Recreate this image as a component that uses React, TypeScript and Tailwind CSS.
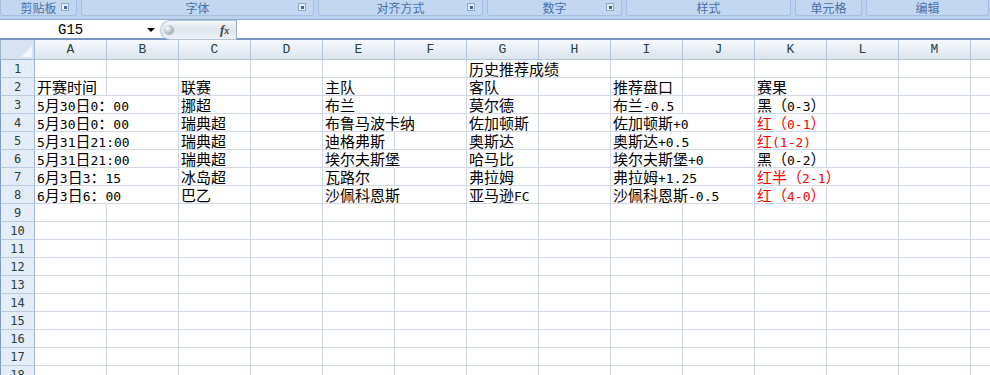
import React from "react";

const COLS = ["A", "B", "C", "D", "E", "F", "G", "H", "I", "J", "K", "L", "M", "N"];

type CellSpec = { t: string; red?: boolean; over?: boolean };
type RowSpec = Record<string, CellSpec>;

const DATA: Record<number, RowSpec> = {
  1: { G: { t: "历史推荐成绩", over: true } },
  2: {
    A: { t: "开赛时间" },
    C: { t: "联赛" },
    E: { t: "主队" },
    G: { t: "客队" },
    I: { t: "推荐盘口" },
    K: { t: "赛果" },
  },
  3: {
    A: { t: "5月30日0：00", over: true },
    C: { t: "挪超" },
    E: { t: "布兰" },
    G: { t: "莫尔德" },
    I: { t: "布兰-0.5" },
    K: { t: "黑（0-3）" },
  },
  4: {
    A: { t: "5月30日0：00", over: true },
    C: { t: "瑞典超" },
    E: { t: "布鲁马波卡纳", over: true },
    G: { t: "佐加顿斯" },
    I: { t: "佐加顿斯+0", over: true },
    K: { t: "红（0-1）", red: true },
  },
  5: {
    A: { t: "5月31日21:00", over: true },
    C: { t: "瑞典超" },
    E: { t: "迪格弗斯" },
    G: { t: "奥斯达" },
    I: { t: "奥斯达+0.5", over: true },
    K: { t: "红(1-2)", red: true },
  },
  6: {
    A: { t: "5月31日21:00", over: true },
    C: { t: "瑞典超" },
    E: { t: "埃尔夫斯堡", over: true },
    G: { t: "哈马比" },
    I: { t: "埃尔夫斯堡+0", over: true },
    K: { t: "黑（0-2）" },
  },
  7: {
    A: { t: "6月3日3：15", over: true },
    C: { t: "冰岛超" },
    E: { t: "瓦路尔" },
    G: { t: "弗拉姆" },
    I: { t: "弗拉姆+1.25", over: true },
    K: { t: "红半（2-1）", red: true, over: true },
  },
  8: {
    A: { t: "6月3日6：00", over: true },
    C: { t: "巴乙" },
    E: { t: "沙佩科恩斯", over: true },
    G: { t: "亚马逊FC" },
    I: { t: "沙佩科恩斯-0.5", over: true },
    K: { t: "红（4-0）", red: true },
  },
};

function T({ s }: { s: string }) {
  const parts = s.split(/([\x20-\x7e]+)/).filter((p) => p.length > 0);
  return (
    <>
      {parts.map((p, i) =>
        /^[\x20-\x7e]+$/.test(p) ? (
          <span key={i} className="inline-block h-[16px] font-['DejaVu_Sans_Mono'] text-[13px] leading-[16px]">
            {p}
          </span>
        ) : (
          <span key={i} className="inline-block h-[16px] leading-[16px]">
            {p}
          </span>
        )
      )}
    </>
  );
}

function Launcher() {
  return (
    <span className="absolute right-[7px] top-[3px] flex h-[8px] w-[8px] items-center justify-center border border-[#8aa8d0] bg-[#e6eef9]">
      <span className="h-[3px] w-[3px] bg-[#41689f]" />
    </span>
  );
}

function Group({ w, label, launcher }: { w: number; label: string; launcher?: boolean }) {
  return (
    <div
      className="relative flex h-[16px] shrink-0 items-end justify-center rounded-b-[3px] border border-t-0 border-[#a5bfe2] bg-[#c3d7f1] text-[12px] leading-[14px] text-[#4a6fa9]"
      style={{ width: w }}
    >
      <span className="font-['Noto_Sans_CJK_SC',sans-serif]">{label}</span>
      {launcher && <Launcher />}
    </div>
  );
}

export default function App() {
  const rows = Array.from({ length: 18 }, (_, i) => i + 1);
  return (
    <div className="h-[375px] w-[990px] overflow-hidden bg-white font-['Noto_Sans_CJK_SC',sans-serif]">
      {/* Ribbon labels */}
      <div className="flex h-[20px] gap-[4px] border-b border-[#8eaacd] bg-[#bdd2ee]">
        <Group w={77} label="剪贴板" launcher />
        <Group w={233} label="字体" launcher />
        <Group w={165} label="对齐方式" launcher />
        <Group w={135} label="数字" launcher />
        <Group w={165} label="样式" />
        <Group w={67} label="单元格" />
        <Group w={123} label="编辑" />
      </div>

      {/* Formula bar */}
      <div className="flex h-[20px] border-b-2 border-[#7896be] bg-white">
        <div className="relative flex w-[160px] items-center">
          <span className="absolute left-[58px] top-[1px] font-['Liberation_Mono',monospace] text-[14px] leading-[18px] text-black">
            G15
          </span>
          <svg className="absolute left-[147px] top-[8px]" width="8" height="4" viewBox="0 0 8 4">
            <path d="M0 0 H8 L4 4 Z" fill="#000" />
          </svg>
        </div>
        <div className="relative h-[20px] w-[77px] rounded-l-full border border-r-[#9aafc9] border-[#b5c5d8] bg-linear-to-b from-[#f4f7fb] via-[#dfe6ef] to-[#eef2f7]">
          <span className="absolute left-[3px] top-[4px] h-[10px] w-[10px] rounded-full bg-radial-[at_35%_35%] from-[#ffffff] via-[#b9bfc6] to-[#8c949d]" />
          <span className="absolute left-[59px] top-[0px] font-['Liberation_Serif',serif] text-[13px] font-bold italic leading-[18px] text-[#444]">
            f<span className="text-[10px]">x</span>
          </span>
        </div>
        <div className="flex-1 bg-white" />
      </div>

      {/* Column headers */}
      <div className="flex h-[20px]">
        <div className="relative h-[20px] w-[35px] shrink-0 border-r border-b border-l border-[#9eb6ce] bg-[#d7e3f3]">
          <svg className="absolute bottom-[2px] right-[2px]" width="11" height="11" viewBox="0 0 11 11">
            <path d="M11 0 V11 H0 Z" fill="#f3f6fa" />
          </svg>
        </div>
        {COLS.map((c) => (
          <div
            key={c}
            className="flex h-[20px] w-[72px] shrink-0 items-center justify-center border-r border-b border-[#b2c5dc] bg-linear-to-b from-[#f8fafd] to-[#dce4ef] font-['Liberation_Mono',monospace] text-[13px] leading-[14px] text-[#27413e]"
          >
            {c}
          </div>
        ))}
      </div>

      {/* Grid rows */}
      {rows.map((r) => {
        const data = DATA[r] || {};
        return (
          <div key={r} className="flex h-[18px]">
            <div className="flex h-[18px] w-[35px] shrink-0 items-end justify-center border-r border-b border-l border-r-[#9eb6ce] border-b-[#b8cbe2] border-l-[#7f9cc4] bg-[#e4ecf7] pb-[1px] font-['DejaVu_Sans_Mono',monospace] text-[12px] leading-[14px] text-[#27413e]">
              {r}
            </div>
            {COLS.map((c) => {
              const cell = data[c];
              return (
                <div
                  key={c}
                  className={
                    "relative flex h-[18px] w-[72px] shrink-0 items-end overflow-visible whitespace-nowrap border-r border-b border-b-[#d0d7e5] pl-[2px] text-[15px] leading-[16px] " +
                    (cell && cell.over ? "border-r-transparent " : "border-r-[#d0d7e5] ") +
                    (cell && cell.red ? "text-[#ff0000]" : "text-black")
                  }
                >
                  {cell ? (
                    <span className="relative z-10 flex h-[16px] items-baseline leading-[16px]">
                      <T s={cell.t} />
                    </span>
                  ) : null}
                </div>
              );
            })}
          </div>
        );
      })}
    </div>
  );
}
